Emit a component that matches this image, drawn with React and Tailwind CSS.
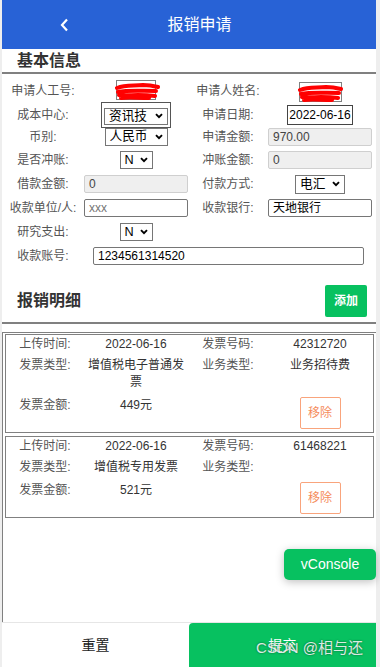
import React from "react"

function Chevron() {
  return (
    <svg width="8" height="6" viewBox="0 0 8 6" className="shrink-0">
      <path d="M1 1.2l3 3 3-3" fill="none" stroke="#000" strokeWidth="1.9" />
    </svg>
  )
}

function Select({ text, w, h = "h-[18px]" }) {
  return (
    <div className={`inline-flex items-center justify-between border border-[#767676] bg-white pl-[4px] pr-[4px] text-[12.7px] leading-none text-black ${w} ${h}`}>
      <span>{text}</span>
      <Chevron />
    </div>
  )
}

function Redacted({ w, shift }) {
  return (
    <div className={`relative h-[20px] border border-[#808080] ${w} ${shift}`}>
      <svg width="46" height="18" viewBox="0 0 46 18" className="absolute left-[-2px] top-[2px]">
        <path
          d="M2 5c8-3 16-2 26-3 6 0 11 1 15 2M3 9c10-2 22-1 38-1M4 12c9 1 20-1 36 1M6 15c8-1 16 0 28 0"
          fill="none"
          stroke="#ff0000"
          strokeWidth="4"
          strokeLinecap="round"
        />
      </svg>
    </div>
  )
}

const label = "text-center text-[12px] text-[#555]"
const disabledInput =
  "h-[18px] w-full rounded-[2px] border border-[#cfcfcf] bg-[#efefef] px-[4px] text-[12px] leading-[16px] text-[#444]"
const textInput =
  "h-[18px] w-full rounded-[2px] border border-[#767676] bg-white px-[4px] text-[12px] leading-[16px]"

function FormRow({ h = "h-[24px]", children }) {
  return <div className={`grid grid-cols-[82px_104px_80px_104px] items-center ${h}`}>{children}</div>
}

function Invoice({ time, code, type, biz, amount }) {
  return (
    <div className="border border-[#808080] pt-[1px] pb-[3px] text-[12px] leading-[17px]">
      <div className="grid grid-cols-[78px_104px_80px_104px] text-center">
        <div className="text-[#555]">上传时间:</div>
        <div className="text-[#333]">{time}</div>
        <div className="text-[#555]">发票号码:</div>
        <div className="text-[#333]">{code}</div>
      </div>
      <div className="mt-[4px] grid grid-cols-[78px_104px_80px_104px] items-start text-center">
        <div className="text-[#555]">发票类型:</div>
        <div className="text-[#333]">{type}</div>
        <div className="text-[#555]">业务类型:</div>
        <div className="text-[#333]">{biz}</div>
      </div>
      <div className="mt-[6px] grid grid-cols-[78px_104px_80px_104px] items-start text-center">
        <div className="text-[#555]">发票金额:</div>
        <div className="text-[#333]">{amount}</div>
        <div />
        <div className="flex justify-center">
          <button className="h-[32px] w-[41px] rounded-[2px] border border-[#f9a47c] bg-white text-[12px] text-[#f58c5c]">
            移除
          </button>
        </div>
      </div>
    </div>
  )
}

export default function App() {
  return (
    <div className="h-[667px] w-[380px] bg-[#eeeeee] pl-[2px] pr-[4px] font-['Liberation_Sans','Noto_Sans_CJK_SC',sans-serif]">
      <div className="relative flex h-full flex-col bg-white">
        {/* HEADER */}
        <div className="flex h-[49px] shrink-0 items-center bg-[#2862d6] text-white">
          <svg width="9" height="14" viewBox="0 0 9 14" className="ml-[58px] shrink-0">
            <path d="M7 1.5L2 7l5 5.5" fill="none" stroke="#fff" strokeWidth="2.2" />
          </svg>
          <div className="mr-[46px] flex-1 text-center text-[16px]">报销申请</div>
        </div>

        {/* BASIC INFO */}
        <div className="h-[23px] pl-[15px] text-[16px] font-bold leading-[24px] text-[#333]">基本信息</div>
        <div className="h-[2px] bg-[#808080]" />

        <div className="pt-[5px]">
          <FormRow h="h-[23px]">
            <div className={label}>申请人工号:</div>
            <div className="flex justify-center">
              <Redacted w="w-[40px]" shift="mt-[-2px]" />
            </div>
            <div className={label}>申请人姓名:</div>
            <div className="flex justify-center">
              <Redacted w="w-[43px]" shift="mt-[2px]" />
            </div>
          </FormRow>
          <FormRow h="h-[23px]">
            <div className={label}>成本中心:</div>
            <div className="flex justify-center">
              <div className="border border-[#555] px-[2px]">
                <Select text="资讯技" w="w-[64px]" h="h-[17px]" />
              </div>
            </div>
            <div className={label}>申请日期:</div>
            <div className="flex justify-center">
              <div className="flex h-[20px] w-[66px] items-center justify-center border border-[#444] text-[12px] text-black">
                2022-06-16
              </div>
            </div>
          </FormRow>
          <FormRow h="h-[23px]">
            <div className={label}>币别:</div>
            <div className="flex justify-center">
              <Select text="人民币" w="w-[63px]" />
            </div>
            <div className={label}>申请金额:</div>
            <div className={disabledInput}>970.00</div>
          </FormRow>
          <FormRow>
            <div className={label}>是否冲账:</div>
            <div className="flex justify-center">
              <Select text="N" w="w-[33px]" />
            </div>
            <div className={label}>冲账金额:</div>
            <div className={disabledInput}>0</div>
          </FormRow>
          <FormRow>
            <div className={label}>借款金额:</div>
            <div className={disabledInput}>0</div>
            <div className={label}>付款方式:</div>
            <div className="flex justify-center">
              <Select text="电汇" w="w-[50px]" h="h-[19px]" />
            </div>
          </FormRow>
          <FormRow>
            <div className={label}>收款单位/人:</div>
            <div className={`${textInput} text-[#757575]`}>xxx</div>
            <div className={label}>收款银行:</div>
            <div className={`${textInput} text-black`}>天地银行</div>
          </FormRow>
          <FormRow>
            <div className={label}>研究支出:</div>
            <div className="flex justify-center">
              <Select text="N" w="w-[33px]" />
            </div>
          </FormRow>
          <div className="flex h-[24px] items-center">
            <div className={`w-[82px] ${label}`}>收款账号:</div>
            <div className="ml-[9px] h-[18px] w-[271px] rounded-[2px] border border-[#767676] px-[4px] text-[12px] leading-[16px] text-black">
              1234561314520
            </div>
          </div>
        </div>

        {/* DETAIL HEADER */}
        <div className="flex items-center justify-between pt-[17px] pb-[5px] pl-[15px] pr-[9px]">
          <div className="text-[16px] font-bold text-[#333]">报销明细</div>
          <button className="h-[32px] w-[42px] rounded-[2px] bg-[#07c160] text-[12px] font-bold text-white">添加</button>
        </div>
        <div className="h-[2px] bg-[#808080]" />

        {/* LIST */}
        <div className="mt-[8px] flex flex-1 flex-col gap-[3px] border-t border-l border-[#808080] px-[2px] pt-[1px]">
          <Invoice time="2022-06-16" code="42312720" type="增值税电子普通发票" biz="业务招待费" amount="449元" />
          <Invoice time="2022-06-16" code="61468221" type="增值税专用发票" biz="" amount="521元" />
        </div>

        {/* BOTTOM BAR */}
        <div className="flex h-[45px] shrink-0 border-t border-[#e6e6e6]">
          <button className="flex-1 bg-white text-[14px] text-[#222]">重置</button>
          <button className="flex-1 rounded-tl-[4px] bg-[#07c160] text-[14px] text-white">提交</button>
        </div>

        <div className="absolute right-[0px] top-[549px] flex h-[31px] w-[92px] items-center justify-center rounded-[5px] bg-[#07c160] text-[14px] text-white shadow-[0_2px_8px_rgba(0,0,0,0.25)]">
          vConsole
        </div>
        <div className="absolute bottom-[8px] right-[13px] text-[15px] text-white/85 [text-shadow:0_0_2px_rgba(0,0,0,0.6)]">
          CSDN @相与还
        </div>
      </div>
    </div>
  )
}
